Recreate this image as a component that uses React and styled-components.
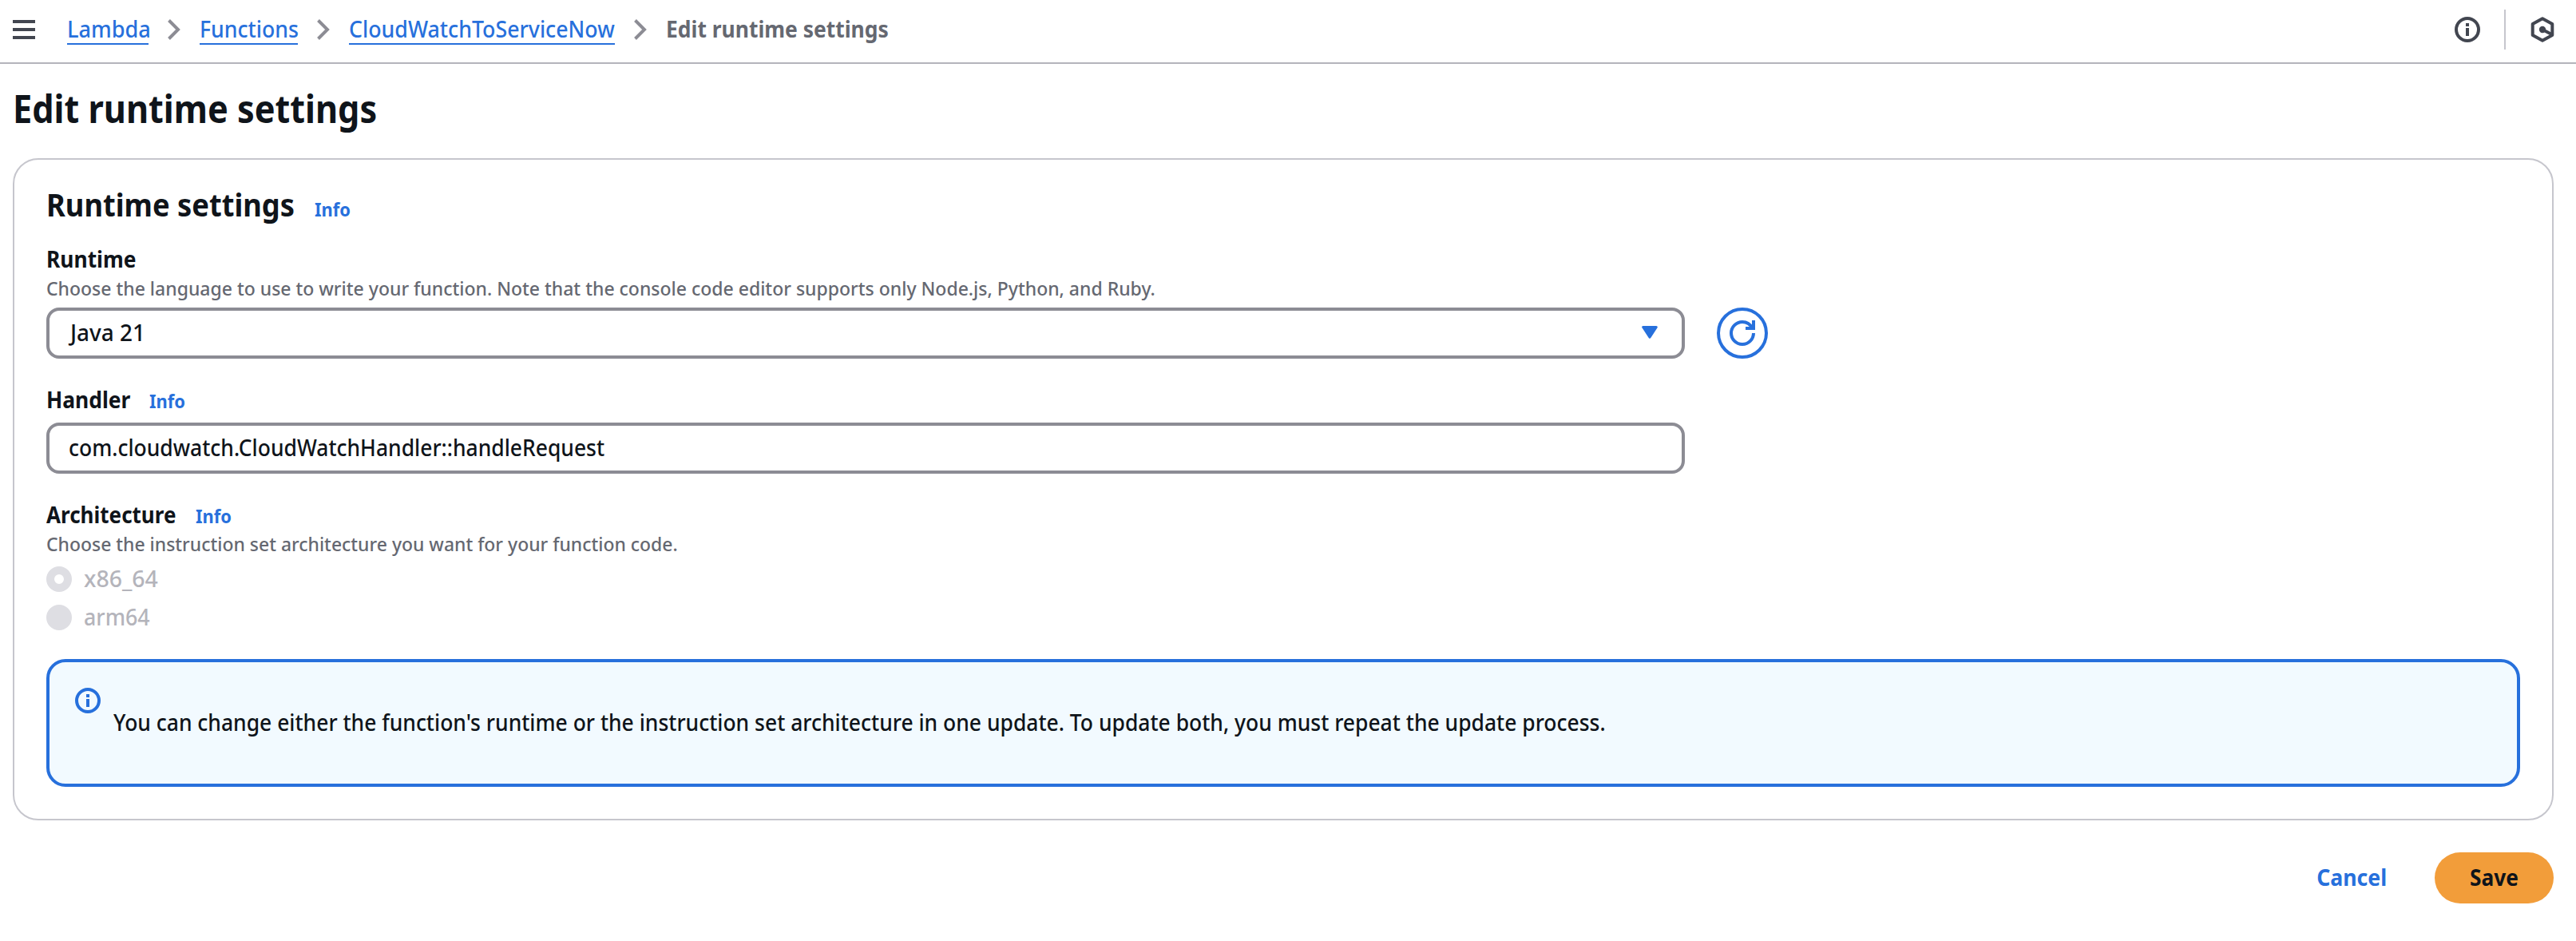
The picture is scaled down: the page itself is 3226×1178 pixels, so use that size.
import React from 'react';
import styled, { createGlobalStyle } from 'styled-components';

const color = {
  text: '#0f141a',
  secondary: '#656871',
  link: '#2770dc',
  icon: '#424650',
  control: '#8c8c94',
  divider: '#c6c6cd',
  disabled: '#b4b4bb',
  disabledFill: '#dedee3',
  infoBg: '#f2faff',
  primary: '#f29d3a',
};

const GlobalStyle = createGlobalStyle`
  *, *::before, *::after { box-sizing: border-box; }
  body {
    margin: 0;
    background: #fff;
    color: ${color.text};
    font-family: "Noto Sans", "Open Sans", sans-serif;
    font-size: 28px;
    font-weight: 500;
    line-height: 38px;
  }
  svg { display: block; flex: none; }
`;

/* Slightly condensed run of text; the scale sets how narrow the letters are. */
const Text = styled.span`
  display: inline-block;
  transform: scaleX(${(p) => p.$scale});
  transform-origin: ${(p) => (p.$center ? 'center' : 'left')};
  white-space: nowrap;
`;

const Page = styled.div`
  min-height: 1178px;
  display: flex;
  flex-direction: column;
`;

const TopBar = styled.header`
  height: 80px;
  padding: 0 26px 4px 16px;
  border-bottom: 2px solid ${color.disabled};
  display: flex;
  align-items: center;
  justify-content: space-between;
`;

const TopBarSide = styled.div`
  display: flex;
  align-items: center;
  gap: ${(p) => p.$gap}px;
`;

const IconButton = styled.button`
  display: flex;
  padding: 0;
  border: 0;
  background: none;
  color: ${color.icon};
`;

const Divider = styled.span`
  width: 2px;
  height: 50px;
  background: ${color.divider};
`;

const Crumbs = styled.nav`
  display: flex;
  align-items: center;
  gap: 24px;
`;

const Crumb = styled.a`
  width: ${(p) => p.$width}px;
  height: 38px;
  line-height: 36px;
  border-bottom: 2px solid ${color.link};
  color: ${color.link};
  text-decoration: none;
`;

const CurrentCrumb = styled.span`
  height: 38px;
  line-height: 36px;
  color: ${color.secondary};
  font-weight: 700;
`;

const Main = styled.main`
  padding: 23px 28px 0 16px;
`;

const Title = styled.h1`
  margin: 0 0 30px;
  height: 65px;
  font-size: 48px;
  line-height: 65px;
  font-weight: 700;
`;

const Card = styled.section`
  padding: 28px 40px 40px;
  border: 2px solid ${color.divider};
  border-radius: 32px;
`;

const CardHeader = styled.div`
  display: flex;
  align-items: baseline;
  height: 55px;
  margin-bottom: 22px;
`;

const CardTitle = styled.h2`
  width: 336px;
  margin: 0;
  font-size: 40px;
  line-height: 55px;
  font-weight: 700;
`;

const InfoAnchor = styled.a`
  color: ${color.link};
  font-size: 24px;
  line-height: 33px;
  font-weight: 700;
`;

const Field = styled.div`
  margin-bottom: 32px;
`;

const LabelRow = styled.div`
  display: flex;
  align-items: baseline;
  height: 38px;
`;

const Label = styled.label`
  width: ${(p) => p.$width}px;
  font-weight: 700;
`;

const Description = styled.p`
  height: 33px;
  margin: 1px 0 8px;
  color: ${color.secondary};
  font-size: 24px;
  line-height: 33px;
`;

const ControlRow = styled.div`
  display: flex;
  align-items: center;
  gap: 40px;
`;

const Control = styled.div`
  width: 2052px;
  height: 64px;
  margin-top: ${(p) => p.$offset || 0}px;
  padding: 8px 30px 10px ${(p) => p.$inset}px;
  border: 4px solid ${color.control};
  border-radius: 16px;
  display: flex;
  align-items: center;
  justify-content: space-between;
`;

const RefreshButton = styled.button`
  width: 64px;
  height: 64px;
  padding: 12px;
  border: 4px solid ${color.link};
  border-radius: 50%;
  background: #fff;
  color: ${color.link};
`;

const RadioList = styled.div`
  display: flex;
  flex-direction: column;
  gap: 10px;
  margin-bottom: 34px;
`;

const RadioRow = styled.label`
  display: flex;
  align-items: flex-start;
  gap: 15px;
  height: 38px;
  color: ${color.disabled};
`;

const RadioMark = styled.span`
  width: 32px;
  height: 32px;
  margin-top: 4px;
  border-radius: 50%;
  border: ${(p) => (p.$checked ? 10 : 16)}px solid ${color.disabledFill};
  background: #fff;
`;

const Alert = styled.div`
  height: 160px;
  padding: 32px;
  border: 4px solid ${color.link};
  border-radius: 24px;
  background: ${color.infoBg};
  display: flex;
  gap: 16px;
  color: ${color.link};
`;

const AlertText = styled.p`
  margin: 24px 0 0;
  color: ${color.text};
`;

const Actions = styled.div`
  display: flex;
  justify-content: flex-end;
  gap: 20px;
  margin-top: 40px;
`;

const Button = styled.button`
  width: ${(p) => (p.$primary ? 149 : 168)}px;
  height: 64px;
  padding: 12px 0 14px;
  border: 0;
  border-radius: 32px;
  background: ${(p) => (p.$primary ? color.primary : 'transparent')};
  color: ${(p) => (p.$primary ? color.text : color.link)};
  font: inherit;
  font-weight: 700;
`;

const MenuIcon = () => (
  <svg width="28" height="24" viewBox="0 0 28 24" fill="currentColor">
    <path d="M0 0h28v4H0zM0 10h28v4H0zM0 20h28v4H0z" />
  </svg>
);

const ChevronIcon = () => (
  <svg width="16" height="26" viewBox="0 0 16 26" fill="none" stroke={color.control} strokeWidth="4">
    <path d="M1.5 1.5 13 13 1.5 24.5" />
  </svg>
);

const InfoIcon = () => (
  <svg width="32" height="32" viewBox="0 0 32 32" fill="none" stroke="currentColor" strokeWidth="4">
    <circle cx="16" cy="16" r="14" />
    <path d="M16 8v4M16 14v10" />
  </svg>
);

const AssistantIcon = () => (
  <svg width="32" height="32" viewBox="0 0 32 32" fill="none" stroke="currentColor" strokeWidth="4" strokeLinejoin="round">
    <path d="M16 2.3 28.3 9v14L16 29.7 3.7 23V9Z" />
    <circle cx="16" cy="16" r="4.2" fill="currentColor" stroke="none" />
    <path d="m16 16 11.5 6" />
  </svg>
);

const CaretIcon = () => (
  <svg width="20" height="16" viewBox="0 0 20 16" fill={color.link} stroke={color.link} strokeWidth="3" strokeLinejoin="round">
    <path d="M1.7 1.5h16.6L10 14.2Z" />
  </svg>
);

const RefreshIcon = () => (
  <svg width="32" height="32" viewBox="0 0 32 32" fill="none" stroke="currentColor" strokeWidth="4">
    <path d="M30 16A14 14 0 1 1 16 2c5.5 0 10 3 12.6 8" />
    <path d="M30 0v10H20" />
  </svg>
);

const InfoLink = () => (
  <InfoAnchor>
    <Text $scale={0.913}>Info</Text>
  </InfoAnchor>
);

const crumbs = [
  { text: 'Lambda', width: 102, scale: 0.969 },
  { text: 'Functions', width: 123, scale: 0.952 },
  { text: 'CloudWatchToServiceNow', width: 333, scale: 0.955 },
];

export default function App() {
  return (
    <Page>
      <GlobalStyle />
      <TopBar>
        <TopBarSide $gap={40}>
          <IconButton aria-label="Open navigation">
            <MenuIcon />
          </IconButton>
          <Crumbs>
            {crumbs.map((c) => (
              <React.Fragment key={c.text}>
                <Crumb $width={c.width}>
                  <Text $scale={c.scale}>{c.text}</Text>
                </Crumb>
                <ChevronIcon />
              </React.Fragment>
            ))}
            <CurrentCrumb>
              <Text $scale={0.944}>Edit runtime settings</Text>
            </CurrentCrumb>
          </Crumbs>
        </TopBarSide>
        <TopBarSide $gap={30}>
          <IconButton aria-label="Info">
            <InfoIcon />
          </IconButton>
          <Divider />
          <IconButton aria-label="Assistant">
            <AssistantIcon />
          </IconButton>
        </TopBarSide>
      </TopBar>

      <Main>
        <Title>
          <Text $scale={0.901}>Edit runtime settings</Text>
        </Title>
        <Card>
          <CardHeader>
            <CardTitle>
              <Text $scale={0.907}>Runtime settings</Text>
            </CardTitle>
            <InfoLink />
          </CardHeader>

          <Field>
            <LabelRow>
              <Label $width={130}>
                <Text $scale={0.943}>Runtime</Text>
              </Label>
            </LabelRow>
            <Description>
              <Text $scale={0.958}>
                Choose the language to use to write your function. Note that the console code editor supports only Node.js, Python, and Ruby.
              </Text>
            </Description>
            <ControlRow>
              <Control $inset={26}>
                <Text $scale={0.997}>Java 21</Text>
                <CaretIcon />
              </Control>
              <RefreshButton aria-label="Refresh">
                <RefreshIcon />
              </RefreshButton>
            </ControlRow>
          </Field>

          <Field>
            <LabelRow>
              <Label $width={129}>
                <Text $scale={0.944}>Handler</Text>
              </Label>
              <InfoLink />
            </LabelRow>
            <Control $offset={10} $inset={24}>
              <Text $scale={0.945}>com.cloudwatch.CloudWatchHandler::handleRequest</Text>
            </Control>
          </Field>

          <LabelRow>
            <Label $width={187}>
              <Text $scale={0.93}>Architecture</Text>
            </Label>
            <InfoLink />
          </LabelRow>
          <Description>
            <Text $scale={0.956}>Choose the instruction set architecture you want for your function code.</Text>
          </Description>
          <RadioList>
            <RadioRow>
              <RadioMark $checked />
              <Text $scale={1.016}>x86_64</Text>
            </RadioRow>
            <RadioRow>
              <RadioMark />
              <Text $scale={0.957}>arm64</Text>
            </RadioRow>
          </RadioList>

          <Alert>
            <InfoIcon />
            <AlertText>
              <Text $scale={0.945}>
                You can change either the function's runtime or the instruction set architecture in one update. To update both, you must repeat the update process.
              </Text>
            </AlertText>
          </Alert>
        </Card>

        <Actions>
          <Button>
            <Text $center $scale={0.951}>Cancel</Text>
          </Button>
          <Button $primary>
            <Text $center $scale={0.938}>Save</Text>
          </Button>
        </Actions>
      </Main>
    </Page>
  );
}
